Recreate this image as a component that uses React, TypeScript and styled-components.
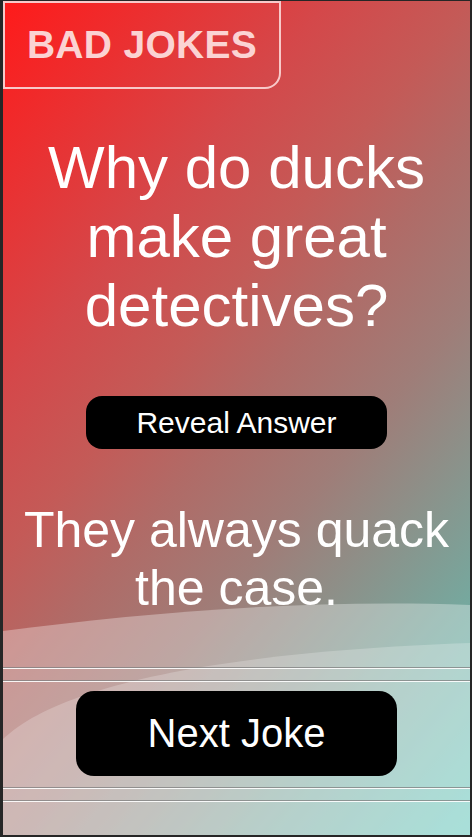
import React from "react";
import styled, { createGlobalStyle } from "styled-components";

const GlobalStyle = createGlobalStyle`
  html, body {
    margin: 0;
    padding: 0;
    background: #262626;
  }
  body {
    font-family: "Liberation Sans", Arial, sans-serif;
  }
  * { box-sizing: border-box; }
`;

const Screen = styled.div`
  position: relative;
  margin: 1px 2px 2px 3px;
  width: 467px;
  height: 834px;
  overflow: hidden;
  display: flex;
  flex-direction: column;
  align-items: center;
  background: linear-gradient(
    130deg,
    #ff1a1a 0%,
    #d4484a 28%,
    #c45a57 40%,
    #b06b67 50%,
    #9f7d78 62%,
    #76a89e 83%,
    #5cc6ba 100%
  );
`;

const Waves = styled.svg`
  position: absolute;
  left: 0;
  top: 0;
  width: 467px;
  height: 834px;
  pointer-events: none;
`;

const Content = styled.div`
  position: relative;
  width: 100%;
  display: flex;
  flex-direction: column;
  align-items: center;
`;

const TitleBox = styled.div`
  align-self: flex-start;
  width: 278px;
  height: 88px;
  border: 2px solid #f8c9c9;
  border-bottom-right-radius: 16px;
  display: flex;
  align-items: center;
  justify-content: center;
  color: #fbd3d3;
  font-weight: 700;
  font-size: 39px;
  letter-spacing: 0.3px;
`;

const Question = styled.h1`
  margin: 44px 0 0;
  width: 100%;
  text-align: center;
  color: #ffffff;
  font-weight: 400;
  font-size: 60px;
  line-height: 69px;
`;

const PillButton = styled.button<{ $w: number; $h: number; $fs: number; $r: number }>`
  width: ${(p) => p.$w}px;
  height: ${(p) => p.$h}px;
  border: none;
  border-radius: ${(p) => p.$r}px;
  background: #000;
  color: #fff;
  font-family: "Liberation Sans", Arial, sans-serif;
  font-size: ${(p) => p.$fs}px;
  padding: 0;
  cursor: pointer;
`;

const RevealWrap = styled.div`
  margin-top: 56px;
`;

const Answer = styled.p`
  margin: 53px 0 0;
  width: 100%;
  text-align: center;
  color: #fff;
  font-size: 50px;
  line-height: 57.5px;
`;

const Divider = styled.div<{ $mt: number }>`
  width: 100%;
  margin-top: ${(p) => p.$mt}px;
  height: 2px;
  border-top: 1px solid rgba(128, 128, 128, 0.75);
  border-bottom: 1px solid rgba(255, 255, 255, 0.9);
`;

const NextWrap = styled.div`
  margin-top: 9px;
`;

export default function App() {
  return (
    <>
      <GlobalStyle />
      <Screen>
        <Waves viewBox="0 0 467 834" aria-hidden="true">
          <path d="M0,630 C140,612 300,598 467,604 L467,834 L0,834 Z" fill="rgba(255,255,255,0.32)" />
          <path d="M0,738 C50,690 190,652 467,642 L467,834 L0,834 Z" fill="rgba(255,255,255,0.22)" />
        </Waves>
        <Content>
          <TitleBox>BAD JOKES</TitleBox>
          <Question>Why do ducks make great detectives?</Question>
          <RevealWrap>
            <PillButton $w={301} $h={53} $fs={30} $r={16}>Reveal Answer</PillButton>
          </RevealWrap>
          <Answer>They always quack the case.</Answer>
          <Divider $mt={50} />
          <Divider $mt={11} />
          <NextWrap>
            <PillButton $w={321} $h={85} $fs={40} $r={18}>Next Joke</PillButton>
          </NextWrap>
          <Divider $mt={11} />
          <Divider $mt={11} />
        </Content>
      </Screen>
    </>
  );
}
